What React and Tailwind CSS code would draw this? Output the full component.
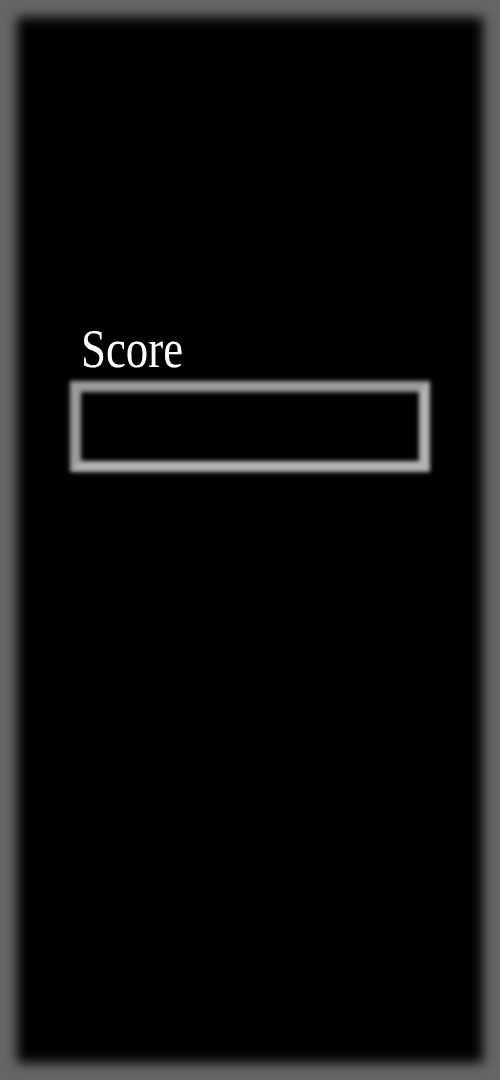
import React from 'react'

export default function App() {
  return (
    <div className="min-h-[1080px] w-full bg-black shadow-[inset_0_0_12px_17px_#666] font-['Liberation_Serif',serif]">
      <div className="flex flex-col pt-[322px] pl-[70px]">
        <label
          htmlFor="score"
          className="ml-[11px] block origin-left scale-x-[0.83] text-[54px] leading-none text-white"
        >
          Score
        </label>
        <input
          id="score"
          type="text"
          className="mt-[5px] h-[91px] w-[360px] border-[11px] border-t-[#9c9c9c] border-l-[#9c9c9c] border-b-[#b4b4b4] border-r-[#b4b4b4] bg-black text-white outline-none blur-[2px]"
        />
      </div>
    </div>
  )
}
